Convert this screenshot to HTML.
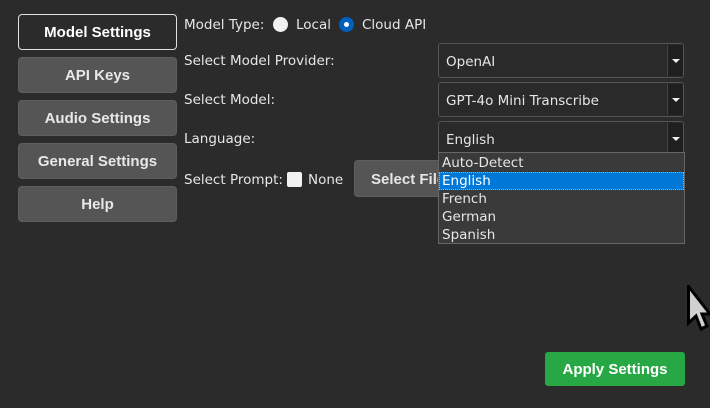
<!DOCTYPE html>
<html><head><meta charset="utf-8"><style>
*{box-sizing:border-box;margin:0;padding:0}
body{width:710px;height:408px;background:#2b2b2b;font-family:"DejaVu Sans","Liberation Sans",sans-serif;color:#e6e6e6;position:relative;overflow:hidden;font-size:13.5px}
.a{position:absolute}
.nav{position:absolute;left:18px;width:159px;height:36px;border-radius:4px;background:#555;border:1px solid #5e5e5e;color:#e8e8e8;font-weight:bold;font-size:15px;display:flex;align-items:center;justify-content:center;font-family:"Liberation Sans",sans-serif}
.nav.act{background:#2b2b2b;border:1px solid #e0e0e0;color:#fff}
.lbl{position:absolute;left:184px;white-space:nowrap;font-size:13.5px}
.combo{position:absolute;left:438px;width:246px;height:35px;border:1px solid #555;border-radius:3px;background:#2a2a2a;padding-left:7px;padding-top:2px;display:flex;align-items:center;font-size:13.5px}
.combo .ar{position:absolute;right:0;top:1px;bottom:1px;width:16px;background:#1f1f1f;border-left:1px solid #444}
.combo .ar:after{content:"";position:absolute;left:4px;top:14px;border-left:4px solid transparent;border-right:4px solid transparent;border-top:4px solid #eee}
.list{position:absolute;left:438px;top:152px;width:247px;height:92px;background:#3a3a3a;border:1px solid #666;font-size:13.5px;padding-top:1px}
.list div{height:18px;line-height:19px;padding-left:3px}
.list .sel{background:#0078d7;color:#fff;outline:1px dotted #f0a040;outline-offset:-1px}
</style></head><body>
<div class="nav act" style="top:14px">Model Settings</div>
<div class="nav" style="top:57px">API Keys</div>
<div class="nav" style="top:100px">Audio Settings</div>
<div class="nav" style="top:143px">General Settings</div>
<div class="nav" style="top:186px">Help</div>

<div class="lbl" style="top:17px">Model Type:</div>
<div class="a" style="left:273px;top:17px;width:15px;height:15px;border-radius:50%;background:#f2f2f2"></div>
<div class="a" style="left:296px;top:17px">Local</div>
<div class="a" style="left:339px;top:17px;width:15px;height:15px;border-radius:50%;background:#0060c0"><div class="a" style="left:5px;top:5px;width:5px;height:5px;border-radius:50%;background:#fff"></div></div>
<div class="a" style="left:362px;top:17px">Cloud API</div>

<div class="lbl" style="top:53px">Select Model Provider:</div>
<div class="lbl" style="top:92px">Select Model:</div>
<div class="lbl" style="top:131px">Language:</div>
<div class="lbl" style="top:172px">Select Prompt:</div>
<div class="a" style="left:287px;top:172px;width:15px;height:15px;border-radius:2px;background:#f2f2f2"></div>
<div class="a" style="left:308px;top:172px">None</div>
<div class="a" style="left:354px;top:160px;width:100px;height:37px;border-radius:4px;background:#555;border:1px solid #5e5e5e;font-weight:bold;font-size:15px;padding:10px 0 0 16px;font-family:'Liberation Sans',sans-serif;white-space:nowrap">Select File</div>

<div class="combo" style="top:43px">OpenAI<div class="ar"></div></div>
<div class="combo" style="top:82px">GPT-4o Mini Transcribe<div class="ar"></div></div>
<div class="combo" style="top:121px">English<div class="ar"></div></div>
<div class="list">
<div>Auto-Detect</div><div class="sel">English</div><div>French</div><div>German</div><div>Spanish</div>
</div>

<svg class="a" style="left:687px;top:285px" width="24" height="48" viewBox="0 0 24 48"><path d="M1.5 1.5 L1.5 38 L9 31 L14 44 L20 41 L15 29 L23 29 Z" fill="#d0d0d0" stroke="#000" stroke-width="3"/></svg>

<div class="a" style="left:545px;top:352px;width:140px;height:34px;border-radius:3px;background:#28a745;color:#fff;font-weight:bold;font-size:15px;display:flex;align-items:center;justify-content:center;font-family:'Liberation Sans',sans-serif">Apply Settings</div>
</body></html>
